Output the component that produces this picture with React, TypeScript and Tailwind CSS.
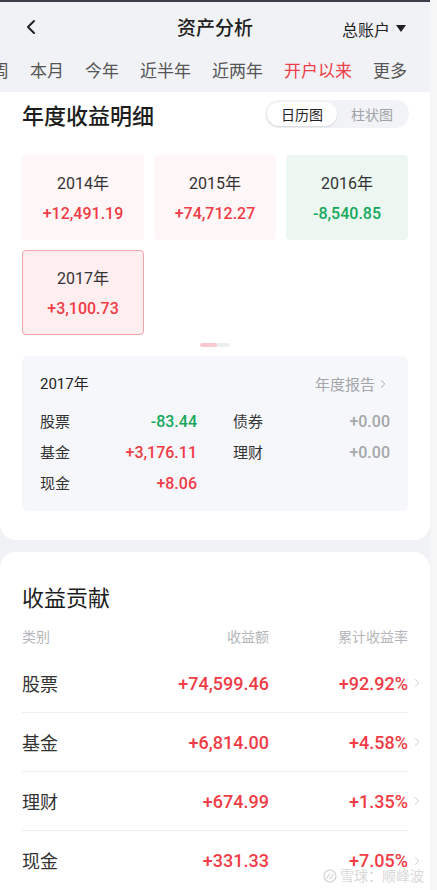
import { ChevronLeft, ChevronRight } from "lucide-react";

const cjk = "font-['Noto_Sans_CJK_SC',sans-serif]";
const num = "font-['Roboto','Noto_Sans_CJK_SC',sans-serif]";

const tabs = ["本周", "本月", "今年", "近半年", "近两年", "开户以来", "更多"];

const years = [
  { year: "2014", value: "+12,491.19", up: true },
  { year: "2015", value: "+74,712.27", up: true },
  { year: "2016", value: "-8,540.85", up: false },
  { year: "2017", value: "+3,100.73", up: true, active: true },
];

const detail = [
  { label: "股票", value: "-83.44", tone: "down" },
  { label: "债券", value: "+0.00", tone: "flat" },
  { label: "基金", value: "+3,176.11", tone: "up" },
  { label: "理财", value: "+0.00", tone: "flat" },
  { label: "现金", value: "+8.06", tone: "up" },
];

const contrib = [
  { label: "股票", amount: "+74,599.46", rate: "+92.92%" },
  { label: "基金", amount: "+6,814.00", rate: "+4.58%" },
  { label: "理财", amount: "+674.99", rate: "+1.35%" },
  { label: "现金", amount: "+331.33", rate: "+7.05%" },
];

function toneClass(tone: string) {
  if (tone === "down") return "text-[#16a85c]";
  if (tone === "flat") return "text-[#a5a7ab]";
  return "text-[#f03c46]";
}

export default function App() {
  return (
    <div className={`flex h-[890px] w-[437px] overflow-hidden ${cjk}`}>
      <div className="relative flex w-[430px] flex-col bg-[#f1f2f6]">
        <div className="h-[2px] shrink-0 bg-[#3a3e49]" />

        {/* nav */}
        <div className="relative flex h-[50px] shrink-0 items-center justify-center">
          <ChevronLeft className="absolute left-[19px] top-[13px] h-[24px] w-[24px] text-[#222]" strokeWidth={2} />
          <span className="text-[19px] font-medium text-[#1f1f1f]">资产分析</span>
          <div className="absolute right-[24px] top-[15px] flex items-center gap-[6px]">
            <span className="text-[16px] text-[#1f1f1f]">总账户</span>
            <svg width="10" height="8" viewBox="0 0 10 8">
              <path d="M0 0h10L5 7z" fill="#1f1f1f" />
            </svg>
          </div>
        </div>

        {/* tabs */}
        <div className="ml-[-25px] flex h-[36px] shrink-0 items-center gap-[21px] whitespace-nowrap">
          {tabs.map((t) => (
            <span
              key={t}
              className={`text-[17px] ${t === "开户以来" ? "text-[#f03c46]" : "text-[#555]"}`}
            >
              {t}
            </span>
          ))}
        </div>

        {/* annual card */}
        <div className="mt-[4px] shrink-0 rounded-b-[16px] bg-white px-[22px] pb-[29px] pt-[7px]">
          <div className="flex h-[30px] items-center justify-between">
            <span className="text-[22px] font-medium text-[#1c1c1c]">年度收益明细</span>
            <div className="-mr-[1px] flex h-[28px] items-center rounded-full bg-[#f2f3f7] p-[2px]">
              <span className="flex h-[24px] w-[70px] items-center justify-center rounded-full bg-white text-[14px] text-[#222] shadow-[0_1px_2px_rgba(0,0,0,0.12)]">
                日历图
              </span>
              <span className="flex h-[24px] w-[70px] items-center justify-center text-[14px] text-[#a0a2a6]">
                柱状图
              </span>
            </div>
          </div>

          <div className="mt-[26px] grid grid-cols-3 gap-[10px]">
            {years.map((y) => (
              <div
                key={y.year}
                className={`flex h-[85px] flex-col items-center justify-center gap-[8px] rounded-[4px] ${
                  y.active
                    ? "border border-[#f2a3aa] bg-[#ffeef0]"
                    : y.up
                      ? "bg-[#fff6f7]"
                      : "bg-[#ebf7f0]"
                }`}
              >
                <span className="text-[16px] leading-[22px] text-[#333]">
                  <span className={num}>{y.year}</span>年
                </span>
                <span
                  className={`${num} text-[16px] font-medium leading-[22px] ${
                    y.up ? "text-[#f03c46]" : "text-[#16a85c]"
                  }`}
                >
                  {y.value}
                </span>
              </div>
            ))}
          </div>

          <div className="mt-[8px] flex justify-center">
            <div className="flex h-[4px] w-[30px] overflow-hidden rounded-full bg-[#eceef2]">
              <div className="h-full w-[17px] rounded-full bg-[#f9c9cd]" />
            </div>
          </div>

          <div className="mt-[9px] rounded-[6px] bg-[#f6f7fa] px-[18px] pb-[12px] pt-[17px]">
            <div className="flex h-[22px] items-center justify-between">
              <span className="text-[15px] text-[#222]">
                <span className={num}>2017</span>年
              </span>
              <span className="flex items-center text-[15px] text-[#a3a5a9]">
                年度报告
                <ChevronRight className="ml-[1px] h-[14px] w-[14px]" strokeWidth={1.6} />
              </span>
            </div>
            <div className="mt-[11px] grid grid-cols-2 gap-x-[36px]">
              {detail.map((d) => (
                <div key={d.label} className="flex h-[31px] items-center justify-between">
                  <span className="text-[15px] text-[#333]">{d.label}</span>
                  <span className={`${num} text-[16px] font-medium ${toneClass(d.tone)}`}>{d.value}</span>
                </div>
              ))}
            </div>
          </div>
        </div>

        {/* contribution card */}
        <div className="mt-[12px] flex-1 rounded-t-[16px] bg-white px-[22px] pt-[30px]">
          <div className="text-[22px] leading-[28px] text-[#1c1c1c]">收益贡献</div>
          <div className="mt-[16px] flex h-[20px] items-center text-[14px] text-[#b4b6ba]">
            <span className="flex-1">类别</span>
            <span className="w-[100px] text-right">收益额</span>
            <span className="w-[139px] text-right">累计收益率</span>
          </div>
          <div className="mt-[8px]">
            {contrib.map((c, i) => (
              <div
                key={c.label}
                className={`flex h-[59px] items-center ${i < contrib.length - 1 ? "border-b border-[#eeeff2]" : ""}`}
              >
                <span className="flex-1 text-[18px] text-[#333]">{c.label}</span>
                <span className={`${num} w-[120px] text-right text-[18px] font-medium text-[#f03c46]`}>{c.amount}</span>
                <span className={`${num} w-[139px] text-right text-[18px] font-medium text-[#f03c46]`}>{c.rate}</span>
                <span className="-mr-[16px] flex w-[16px] justify-end">
                  <ChevronRight className="h-[14px] w-[14px] text-[#c4c6ca]" strokeWidth={1.5} />
                </span>
              </div>
            ))}
          </div>
        </div>

        {/* watermark */}
        <div className="absolute bottom-[4px] right-[6px] flex items-center gap-[3px] opacity-80">
          <svg width="14" height="14" viewBox="0 0 14 14">
            <circle cx="7" cy="7" r="6" fill="none" stroke="#c8c8c8" strokeWidth="1.2" />
            <path d="M3.5 9.5 L7 4.5 M6.5 10 L10.5 5" stroke="#c8c8c8" strokeWidth="1.2" fill="none" />
          </svg>
          <span className="text-[14px] text-[#cfcfcf]">雪球：顺峰波</span>
        </div>
      </div>
      <div className="flex-1 bg-[#f6f6f6]" />
    </div>
  );
}
